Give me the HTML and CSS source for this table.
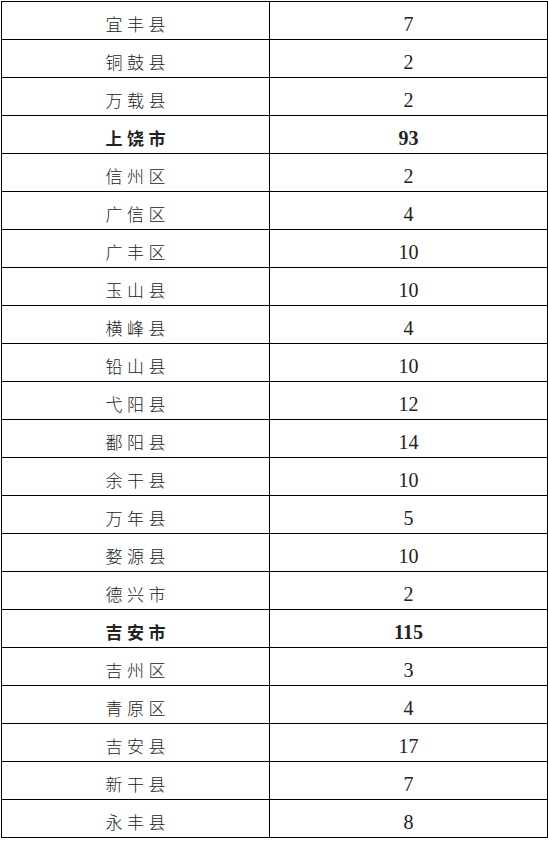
FILE: index.html
```html
<!DOCTYPE html>
<html lang="zh">
<head>
<meta charset="utf-8">
<link rel="stylesheet" href="styles.css">
</head>
<body>
<table class="tbl">
<colgroup><col class="c1"><col class="c2"></colgroup>
<tbody>
<tr><td class="name">宜丰县</td><td class="num">7</td></tr>
<tr><td class="name">铜鼓县</td><td class="num">2</td></tr>
<tr><td class="name">万载县</td><td class="num">2</td></tr>
<tr class="city"><td class="name">上饶市</td><td class="num">93</td></tr>
<tr><td class="name">信州区</td><td class="num">2</td></tr>
<tr><td class="name">广信区</td><td class="num">4</td></tr>
<tr><td class="name">广丰区</td><td class="num">10</td></tr>
<tr><td class="name">玉山县</td><td class="num">10</td></tr>
<tr><td class="name">横峰县</td><td class="num">4</td></tr>
<tr><td class="name">铅山县</td><td class="num">10</td></tr>
<tr><td class="name">弋阳县</td><td class="num">12</td></tr>
<tr><td class="name">鄱阳县</td><td class="num">14</td></tr>
<tr><td class="name">余干县</td><td class="num">10</td></tr>
<tr><td class="name">万年县</td><td class="num">5</td></tr>
<tr><td class="name">婺源县</td><td class="num">10</td></tr>
<tr><td class="name">德兴市</td><td class="num">2</td></tr>
<tr class="city"><td class="name">吉安市</td><td class="num">115</td></tr>
<tr><td class="name">吉州区</td><td class="num">3</td></tr>
<tr><td class="name">青原区</td><td class="num">4</td></tr>
<tr><td class="name">吉安县</td><td class="num">17</td></tr>
<tr><td class="name">新干县</td><td class="num">7</td></tr>
<tr><td class="name">永丰县</td><td class="num">8</td></tr>
</tbody>
</table>
</body>
</html>
```
FILE: styles.css
```css
html, body {
  margin: 0;
  padding: 0;
  background: #fff;
}
body {
  padding: 1px 0 0 1px;
}
.tbl {
  border-collapse: collapse;
  width: 546px;
  table-layout: fixed;
  border: 1px solid #000;
}
.c1 { width: 268px; }
.c2 { width: 278px; }
.tbl td {
  border: 1px solid #000;
  height: 38px;
  padding: 6px 0 0 0;
  box-sizing: border-box;
  text-align: center;
  vertical-align: middle;
  color: #222;
}
.name {
  font-family: "Noto Sans CJK SC", "Noto Sans", sans-serif;
  font-size: 17px;
  font-weight: 300;
  letter-spacing: 4.5px;
  padding-left: 4.5px !important;
  line-height: 20px;
}
.num {
  font-family: "Liberation Serif", "DejaVu Serif", serif;
  font-size: 20px;
  line-height: 20px;
}
.city td {
  font-weight: bold;
}
```
